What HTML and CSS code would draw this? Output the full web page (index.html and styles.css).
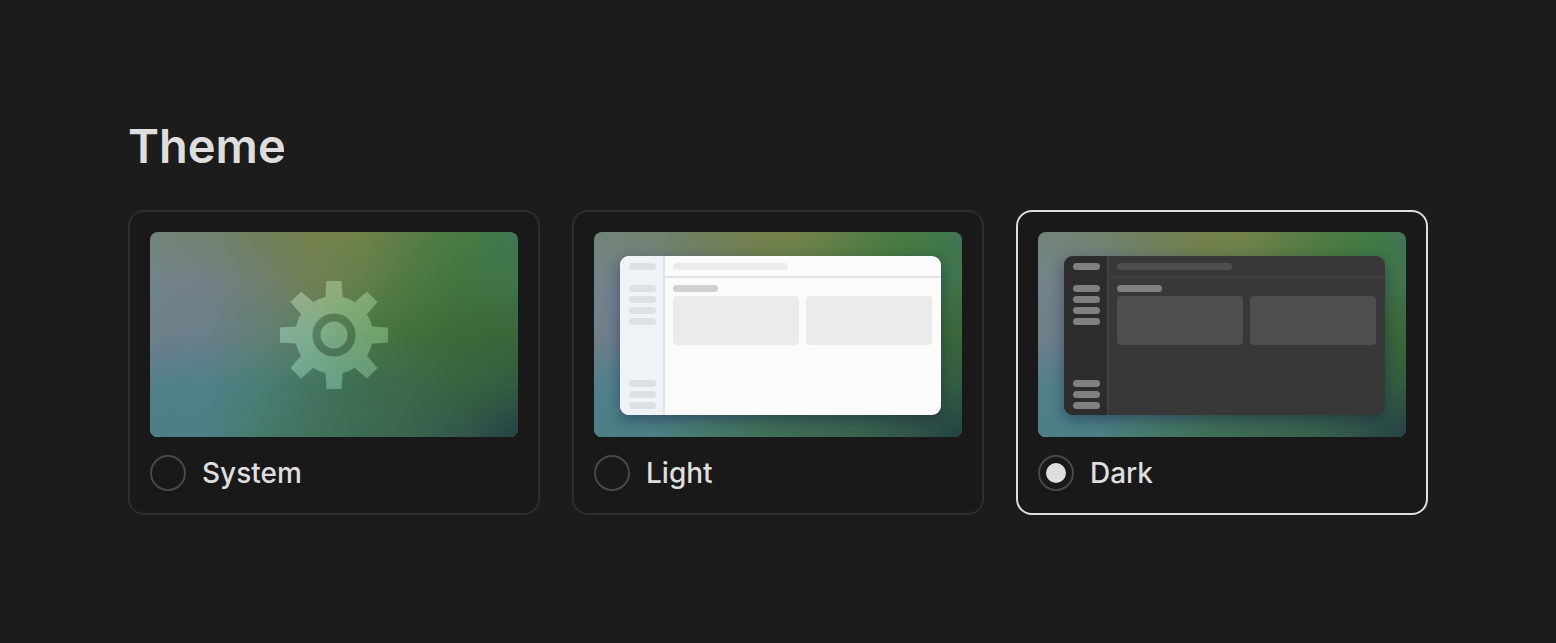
FILE: index.html
```html
<!DOCTYPE html>
<html lang="en">
<head>
    <meta charset="UTF-8">
    <meta name="viewport" content="width=device-width, initial-scale=1.0">
    <title>Theme</title>
    <link rel="stylesheet" href="styles.css">
</head>
<body>

<main class="settings">
    <h1 id="theme-title">Theme</h1>

    <div class="theme-list" role="radiogroup" aria-labelledby="theme-title">

        <!-- System -->
        <label class="theme-card">
            <span class="preview preview-system">
                <span class="wallpaper"><i></i><i></i><i></i><i></i><i></i></span>
                <svg class="gear" viewBox="-55 -55 110 110" aria-hidden="true">
                    <defs>
                        <path id="tooth" d="M-9 -30 L-8.5 -39 L-7.5 -54 H7.5 L8.5 -39 L9 -30 Z"/>
                        <mask id="gear-shape" maskUnits="userSpaceOnUse" x="-55" y="-55" width="110" height="110">
                            <g fill="#fff">
                                <circle r="39"/>
                                <use href="#tooth"/>
                                <use href="#tooth" transform="rotate(45)"/>
                                <use href="#tooth" transform="rotate(90)"/>
                                <use href="#tooth" transform="rotate(135)"/>
                                <use href="#tooth" transform="rotate(180)"/>
                                <use href="#tooth" transform="rotate(225)"/>
                                <use href="#tooth" transform="rotate(270)"/>
                                <use href="#tooth" transform="rotate(315)"/>
                            </g>
                            <circle r="17.5" fill="none" stroke="#000" stroke-width="8"/>
                        </mask>
                    </defs>
                    <rect class="gear-fill" x="-55" y="-55" width="110" height="110" mask="url(#gear-shape)"/>
                </svg>
            </span>
            <span class="option">
                <input type="radio" name="theme" value="system">
                System
            </span>
        </label>

        <!-- Light -->
        <label class="theme-card">
            <span class="preview">
                <span class="wallpaper"><i></i><i></i><i></i><i></i><i></i></span>
                <span class="window window-light">
                    <span class="sidebar">
                        <span class="bar"></span>
                        <span class="nav"><span class="bar"></span><span class="bar"></span><span class="bar"></span><span class="bar"></span></span>
                        <span class="nav nav-bottom"><span class="bar"></span><span class="bar"></span><span class="bar"></span></span>
                    </span>
                    <span class="content">
                        <span class="toolbar"><span class="bar"></span></span>
                        <span class="page">
                            <span class="heading"></span>
                            <span class="blocks"><span></span><span></span></span>
                        </span>
                    </span>
                </span>
            </span>
            <span class="option">
                <input type="radio" name="theme" value="light">
                Light
            </span>
        </label>

        <!-- Dark -->
        <label class="theme-card">
            <span class="preview">
                <span class="wallpaper"><i></i><i></i><i></i><i></i><i></i></span>
                <span class="window window-dark">
                    <span class="sidebar">
                        <span class="bar"></span>
                        <span class="nav"><span class="bar"></span><span class="bar"></span><span class="bar"></span><span class="bar"></span></span>
                        <span class="nav nav-bottom"><span class="bar"></span><span class="bar"></span><span class="bar"></span></span>
                    </span>
                    <span class="content">
                        <span class="toolbar"><span class="bar"></span></span>
                        <span class="page">
                            <span class="heading"></span>
                            <span class="blocks"><span></span><span></span></span>
                        </span>
                    </span>
                </span>
            </span>
            <span class="option">
                <input type="radio" name="theme" value="dark" checked>
                Dark
            </span>
        </label>
    </div>
</main>

</body>
</html>
```
FILE: styles.css
```css
* {
    box-sizing: border-box;
}

body {
    margin: 0;
    background-color: #1c1c1c;
    color: #dedede;
    font-family: Inter, sans-serif;
}

.settings {
    padding: 118px 128px 128px;
}

h1 {
    margin: 0 0 36px;
    font-size: 47px;
    line-height: 56px;
    font-weight: 600;
}

.theme-list {
    display: flex;
    gap: 32px;
}

/* Cards */
.theme-card {
    flex: 1;
    padding: 20px 20px 22px;
    border: 2px solid #2e2e2e;
    border-radius: 16px;
    background-color: #191919;
    cursor: pointer;
}

.theme-card:has(input:checked) {
    border-color: #dedede;
}

.option {
    display: flex;
    align-items: center;
    gap: 16px;
    margin-top: 18px;
    font-size: 28px;
    line-height: 36px;
    font-weight: 500;
}

.option input {
    appearance: none;
    display: grid;
    place-items: center;
    width: 36px;
    height: 36px;
    margin: 0;
    border: 2px solid #484848;
    border-radius: 50%;
    cursor: pointer;
}

.option input:checked::before {
    content: "";
    width: 20px;
    height: 20px;
    border-radius: 50%;
    background-color: #dedede;
}

/* Preview */
.preview {
    position: relative;
    display: flex;
    height: 205px;
    padding: 24px 21px 22px 26px;
    border-radius: 8px;
    overflow: hidden;
    isolation: isolate;
}

.preview-system {
    align-items: center;
    justify-content: center;
    padding: 0;
}

/* Colour mesh: each row of colours fades in over the one above it */
.wallpaper,
.wallpaper i {
    position: absolute;
    inset: 0;
}

.wallpaper i:nth-child(1) {
    background: linear-gradient(90deg, #72857a, #71846f 16%, #727f5c 30%, #73814c 45%, #71824a 57%, #5d7e47 70%, #477c42 85%, #41794a 93%, #437557);
}

.wallpaper i:nth-child(2) {
    background: linear-gradient(90deg, #72838a, #728087 16%, #718070 30%, #717f53 45%, #63804b 57%, #507a41 70%, #407541 85%, #40744a);
    mask-image: linear-gradient(transparent, #000 25%);
}

.wallpaper i:nth-child(3) {
    background: linear-gradient(90deg, #707f8b, #6a7f8a 16%, #627f76 30%, #577f62 45%, #4b7648 57%, #44703d 70%, #3c6a39 85%, #3b6639);
    mask-image: linear-gradient(transparent 25%, #000 50%);
}

.wallpaper i:nth-child(4) {
    background: linear-gradient(90deg, #528089, #4f8088 16%, #4a7e76 30%, #437460 45%, #3e6d52 57%, #3c694a 70%, #38633f 85%, #335c42);
    mask-image: linear-gradient(transparent 50%, #000 75%);
}

.wallpaper i:nth-child(5) {
    background: linear-gradient(90deg, #4a8084, #4b8085 16%, #467a6c 30%, #41705a 45%, #3d6a55 57%, #3a6450 70%, #33574b 85%, #244046);
    mask-image: linear-gradient(transparent 75%, #000);
}

.gear {
    width: 110px;
    height: 110px;
    mix-blend-mode: plus-lighter;
}

.gear-fill {
    fill: #272e2a;
}

/* App window inside the preview */
.window {
    --sidebar: #eff3f7;
    --sidebar-bar: #dce1e4;
    --line: #e0e4e8;
    --content: #fbfbfb;
    --block: #ebebeb;
    --heading: #d0d0d0;
    position: relative;
    display: flex;
    flex: 1;
    border-radius: 9px;
    background-color: var(--content);
    box-shadow: 0 5px 14px rgba(20, 24, 70, 0.45);
    overflow: hidden;
}

.window-dark {
    --sidebar: #2c2c2c;
    --sidebar-bar: #808080;
    --line: #414141;
    --content: #383838;
    --block: #4e4e4e;
    --heading: #808080;
}

.sidebar {
    display: flex;
    flex-direction: column;
    width: 45px;
    padding: 7px 7px 6px 9px;
    border-right: 2px solid var(--line);
    background-color: var(--sidebar);
}

.bar,
.heading {
    display: block;
    height: 7px;
    border-radius: 4px;
    background-color: var(--sidebar-bar);
}

.nav {
    display: flex;
    flex-direction: column;
    gap: 4px;
    margin-top: 15px;
}

.nav-bottom {
    margin-top: auto;
}

.content {
    flex: 1;
}

.toolbar {
    display: block;
    padding: 7px 9px 6px 8px;
    border-bottom: 2px solid var(--line);
}

.toolbar .bar {
    width: 115px;
    background-color: var(--block);
}

.page {
    display: block;
    padding: 7px 9px 7px 8px;
}

.heading {
    width: 45px;
    background-color: var(--heading);
}

.blocks {
    display: flex;
    gap: 7px;
    margin-top: 4px;
}

.blocks span {
    flex: 1;
    height: 49px;
    border-radius: 4px;
    background-color: var(--block);
}
```
